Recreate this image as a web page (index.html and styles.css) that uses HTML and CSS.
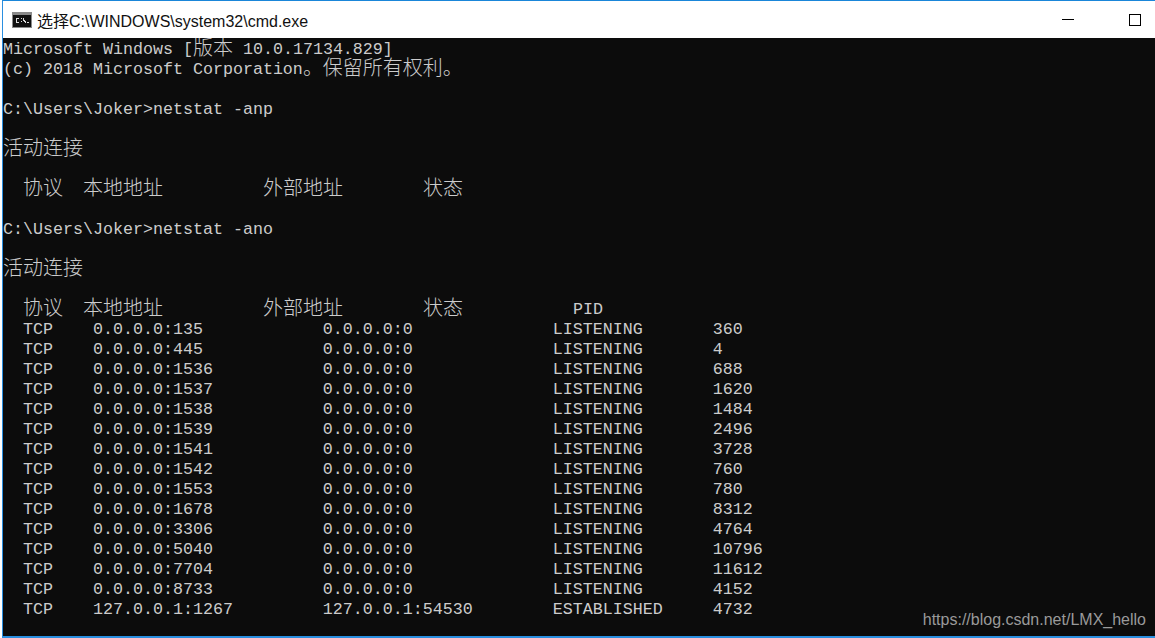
FILE: index.html
```html
<!DOCTYPE html>
<html lang="zh">
<head>
<meta charset="utf-8">
<title>cmd.exe</title>
<link rel="stylesheet" href="styles.css">
</head>
<body>
<div class="window">
  <header class="titlebar">
    <svg class="app-icon" width="20" height="16" viewBox="0 0 20 16">
      <rect x="0" y="0" width="20" height="16" fill="#8a8a8a"/>
      <rect x="1" y="3" width="18" height="12" fill="#111"/>
      <path d="M4 6h3v1H5v3h2v1H4zM9 6h1v1H9zM9 9h1v1H9zM11 6h1v2h1v1h1v2h-1v-1h-1V9h-1zM15 10h2v1h-2z" fill="#ddd"/>
    </svg>
    <span class="title">选择C:\WINDOWS\system32\cmd.exe</span>
    <div class="controls">
      <span class="minimize"></span>
      <span class="maximize"></span>
    </div>
  </header>
  <main class="console">
<pre class="output">Microsoft Windows [<span class="cjk">版本</span> 10.0.17134.829]
(c) 2018 Microsoft Corporation<span class="cjk">。保留所有权利。</span>

C:\Users\Joker&gt;netstat -anp

<span class="cjk">活动连接</span>

  <span class="cjk">协议</span>  <span class="cjk">本地地址</span>          <span class="cjk">外部地址</span>        <span class="cjk">状态</span>

C:\Users\Joker&gt;netstat -ano

<span class="cjk">活动连接</span>

  <span class="cjk">协议</span>  <span class="cjk">本地地址</span>          <span class="cjk">外部地址</span>        <span class="cjk">状态</span>           PID
  TCP    0.0.0.0:135            0.0.0.0:0              LISTENING       360
  TCP    0.0.0.0:445            0.0.0.0:0              LISTENING       4
  TCP    0.0.0.0:1536           0.0.0.0:0              LISTENING       688
  TCP    0.0.0.0:1537           0.0.0.0:0              LISTENING       1620
  TCP    0.0.0.0:1538           0.0.0.0:0              LISTENING       1484
  TCP    0.0.0.0:1539           0.0.0.0:0              LISTENING       2496
  TCP    0.0.0.0:1541           0.0.0.0:0              LISTENING       3728
  TCP    0.0.0.0:1542           0.0.0.0:0              LISTENING       760
  TCP    0.0.0.0:1553           0.0.0.0:0              LISTENING       780
  TCP    0.0.0.0:1678           0.0.0.0:0              LISTENING       8312
  TCP    0.0.0.0:3306           0.0.0.0:0              LISTENING       4764
  TCP    0.0.0.0:5040           0.0.0.0:0              LISTENING       10796
  TCP    0.0.0.0:7704           0.0.0.0:0              LISTENING       11612
  TCP    0.0.0.0:8733           0.0.0.0:0              LISTENING       4152
  TCP    127.0.0.1:1267         127.0.0.1:54530        ESTABLISHED     4732</pre>
    <span class="watermark">https://blog.csdn.net/LMX_hello</span>
  </main>
</div>
</body>
</html>
```
FILE: styles.css
```css
html, body {
  margin: 0;
  padding: 0;
  background: #fff;
  overflow: hidden;
}
.window {
  width: 1153px;
  height: 638px;
  margin-left: 2px;
  box-sizing: border-box;
  display: flex;
  flex-direction: column;
  border-top: 1px solid #1a86d9;
  border-left: 1px solid #2a8fe0;
  border-bottom: 2px solid #2a8fe0;
}
.titlebar {
  height: 37px;
  flex: none;
  background: #fff;
  display: flex;
  align-items: center;
  padding-left: 9px;
  gap: 5px;
}
.title {
  font-family: "Liberation Sans", "Noto Sans CJK SC", sans-serif;
  font-size: 16px;
  color: #111;
}
.controls {
  margin-left: auto;
  display: flex;
  align-items: center;
  gap: 55px;
  padding-right: 14px;
}
.minimize {
  display: block;
  width: 12px;
  height: 1px;
  background: #000;
}
.maximize {
  display: block;
  width: 10px;
  height: 10px;
  border: 1px solid #000;
}
.console {
  flex: 1;
  position: relative;
  background: #0c0c0c;
  overflow: hidden;
}
.output {
  margin: 0;
  padding-top: 2px;
  font-family: "Liberation Mono", monospace;
  font-size: 16.665px;
  line-height: 20px;
  color: #cccccc;
}
.cjk {
  font-family: "Noto Sans CJK SC", sans-serif;
  font-size: 20px;
  font-weight: 300;
  line-height: 0;
  vertical-align: -1px;
}
.watermark {
  position: absolute;
  right: 9px;
  bottom: 7px;
  font-family: "Liberation Sans", sans-serif;
  font-size: 16px;
  color: #9a9a9a;
}
```
